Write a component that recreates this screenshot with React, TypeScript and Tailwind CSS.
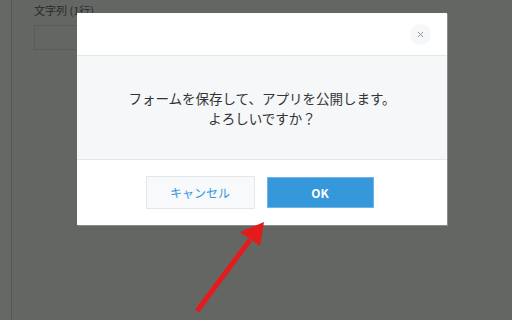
import { X } from "lucide-react";

export default function App() {
  return (
    <div className="relative w-[512px] h-[320px] overflow-hidden bg-[#646664] font-['Noto_Sans_CJK_JP','Liberation_Sans',sans-serif]">
      {/* dimmed page behind */}
      <div className="flex h-full">
        <div className="w-[12px] h-full bg-[#666866] border-r border-[#555755]" />
        <div className="pl-[22px] pt-[2px]">
          <div className="text-[11px] leading-[16px] text-[#2a2b2a]">文字列 (1行)</div>
          <div className="mt-[7px] w-[120px] h-[25px] border border-[#5a5c5a]" />
        </div>
      </div>

      {/* dialog */}
      <div className="absolute left-[77px] top-[13px] w-[370px] bg-white shadow-[1px_1px_0_#8a8c8a]">
        <div className="h-[43px] flex justify-end items-center pr-[16px] border-b border-[#e3e7e8]">
          <button className="w-[21px] h-[21px] rounded-full bg-[#f5f7f8] flex items-center justify-center text-[#8c9090]">
            <X size={9} strokeWidth={2.5} />
          </button>
        </div>
        <div className="h-[104px] bg-[#f5f7f8] border-b border-[#e3e7e8] flex flex-col items-center justify-center text-[13.5px] leading-[20px] text-[#333]">
          <p>フォームを保存して、アプリを公開します。</p>
          <p>よろしいですか？</p>
        </div>
        <div className="h-[65px] flex items-center justify-center gap-[12px] pr-[5px]">
          <button className="w-[109px] h-[33px] bg-[#f7f9fa] border border-[#e3e7e8] text-[12px] text-[#3498db]">
            キャンセル
          </button>
          <button className="w-[107px] h-[31px] bg-[#3498db] border border-[#6fb5e5] text-[12px] font-semibold text-white">
            OK
          </button>
        </div>
      </div>

      {/* red arrow */}
      <svg className="absolute left-0 top-0" width="512" height="320" viewBox="0 0 512 320">
        <line x1="197" y1="311" x2="250" y2="240" stroke="#e41b1b" strokeWidth="5" />
        <polygon points="264,222 260,246 240,232" fill="#e41b1b" />
      </svg>
    </div>
  );
}
